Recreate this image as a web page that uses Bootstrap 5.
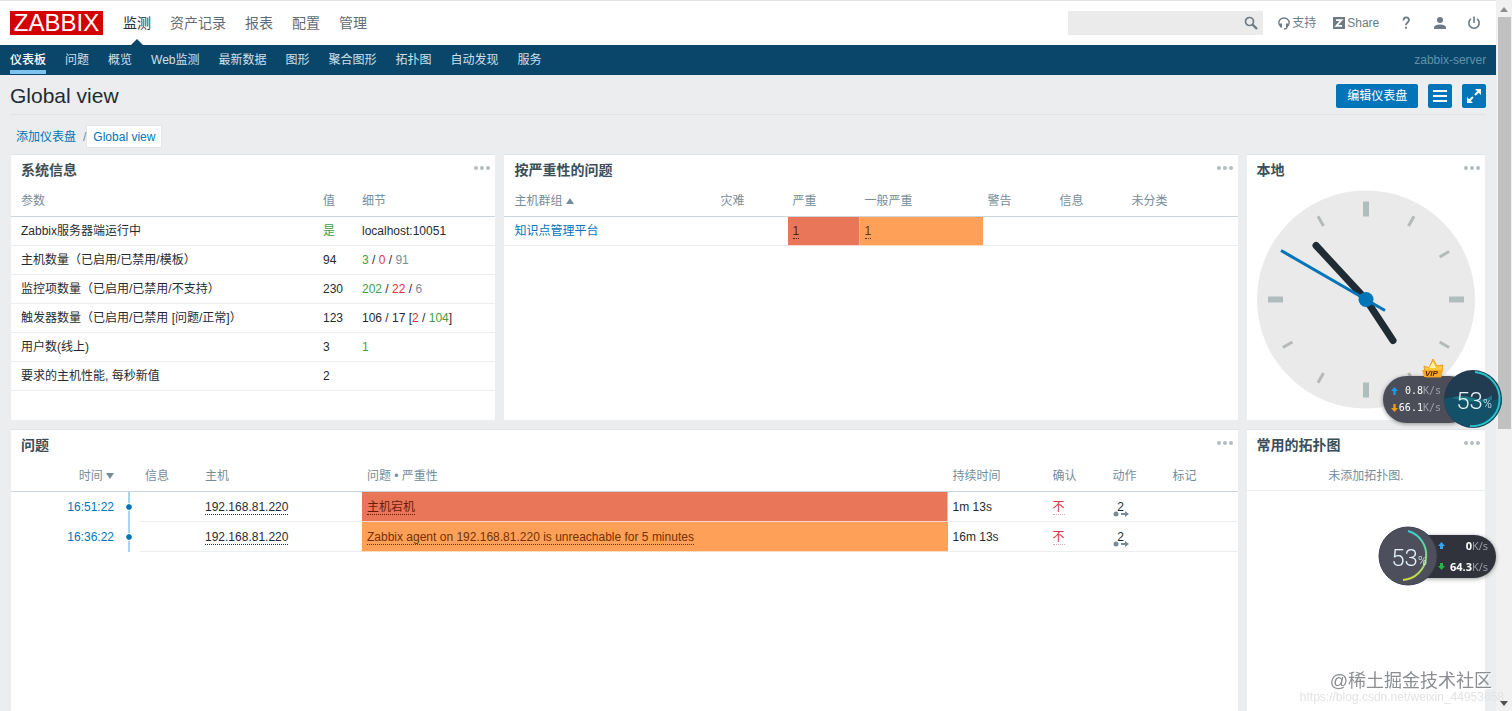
<!DOCTYPE html>
<html lang="zh-CN">
<head>
<meta charset="utf-8">
<meta name="viewport" content="width=device-width, initial-scale=1">
<title>Global view</title>
<link href="https://cdn.jsdelivr.net/npm/bootstrap@5.3.0/dist/css/bootstrap.min.css" rel="stylesheet">
<style>
body{font:12px/16px "Liberation Sans","Noto Sans CJK SC",sans-serif;color:#1f2c33;background:#ebedef}
a{color:#0275b8;text-decoration:none}
.topbar{height:45px;padding:0 10px;border-top:1px solid #dfe1e3}
.logo{background:#d40000;color:#fff;font-size:24px;line-height:24px;height:24px;width:93px;text-align:center}
.mainmenu{gap:19px;margin-left:20px;font-size:14px;line-height:20px}
.mainmenu a{color:#5f6d76;position:relative}
.mainmenu a.active{color:#26343c}
.mainmenu a.active::after{content:"";position:absolute;left:50%;top:26px;margin-left:-8px;border:8px solid transparent;border-top:0;border-bottom-color:#0a466a}
.searchbox{width:195px;height:24px;background:#ebebeb;margin-right:15px}
.searchbox input{height:24px;min-width:0}
.tools a{color:#6c7b84;display:flex;align-items:center}
.tools .t-share{margin-left:17px}
.tools .t-help,.tools .t-user,.tools .t-power{margin-left:20px}
.tools .t-power{margin-right:5px}
.tools svg.near{margin-right:2px}
.subnav{background:#0a466a;height:30px;padding:0 10px;gap:19px}
.subnav a{color:#cfe0ea;line-height:24px;border-bottom:4px solid transparent;height:29px;padding-top:3px;white-space:nowrap}
.subnav a.active{color:#fff;border-color:#7ec3ee;font-weight:500}
.server{color:#6590aa}
.titlebar{height:40px;margin:0 10px;padding-top:3px;border-bottom:1px solid #e1e4e6}
.titlebar h1{font-size:21px;line-height:26px;font-weight:400}
.actions{gap:10px}
.bluebtn{background:#0275b8;color:#fff;border:0;border-radius:2px;height:24px;font-size:12px;line-height:24px;padding:0 11px}
.bluebtn.sq{width:24px;padding:0;line-height:1}
.crumbs{padding:0 16px;height:21px;margin:11px 0 7px;line-height:22px}
.crumbs .cur{background:#fff;padding:0 6px;box-shadow:0 0 1px #b8c4ca}
.crumbs .sep{padding:0 1px 0 7px;color:#768d99}
.dash{display:grid;grid-template-columns:485fr 734fr 239fr;grid-template-rows:266px minmax(280px,1fr);gap:9px;padding:0 11px;min-height:0}
.wide{grid-column:span 2}
.panel{background:#fff;border-top:1px solid #dfe4e7;overflow:hidden;min-width:0}
.panel header{height:30px;padding:0 4px 0 10px}
.panel h2{font-size:14px;line-height:20px;font-weight:700;color:#3c4e58;padding-top:5px}
.dots{border:0;background:none;padding:0;height:26px;line-height:0}
.grid-table{table-layout:fixed;width:100%;margin:0;color:inherit;border-collapse:separate;border-spacing:0}
.grid-table th,.grid-table td{padding:0 5px;height:29px;border:0;border-bottom:1px solid #ebeef0;vertical-align:middle;font-weight:400;white-space:nowrap}
.grid-table th{height:32px;color:#768d99;border-bottom:1px solid #ccd5d9}
.grid-table th:first-child,.grid-table td:first-child{padding-left:10px}
.grid-table.prob td{height:30px}
.c1{width:307px}.c2{width:39px}
.w21{width:21px}.w60{width:60px}.w70{width:70px}.w72{width:72px}.w100{width:100px}.w108{width:108px}.w111{width:111px}.w123{width:123px}.w162{width:162px}
.grid-table td.high{background:#e97659;color:#6a1a0c;border-bottom-color:#f5d5cc;box-shadow:inset -1px 0 #f6b8a0}
.grid-table td.avg{background:#ffa059;color:#733100;border-bottom-color:#fbdcc0}
.prob td.nb{border-bottom-color:transparent}
.dot-u{border-bottom:1px dotted;color:inherit}
.dot-u.red{border-color:#d9aab0}
.grn{color:#429e47}.red{color:#dc3545}.gry{color:#768d99}
.tl{position:relative}
.tl::before{content:"";position:absolute;left:9px;top:0;bottom:-1px;width:2px;background:#a6d5f2}
.tl::after{content:"";position:absolute;left:7px;top:12px;width:6px;height:6px;border-radius:50%;background:#0275b8;outline:1px solid #fff}
.act{display:block;width:16px;text-align:center;position:relative;color:inherit}
.act svg{position:absolute;left:0;top:12px}
.clock{padding-top:1px}
.empty{height:31px;line-height:32px;color:#768d99;text-align:center;border-bottom:1px solid #ebeef0}
.sbar{width:16px;background:#f1f1f1;flex:none}
.sbar .thumb{height:58%;width:13px;background:#c1c1c1}
.float-a,.float-b{position:fixed;z-index:5;height:60px}
.float-a{right:9px;top:369px;width:120px}
.float-b{right:16px;top:526px;width:118px}
.pill{color:#fff;box-shadow:0 1px 4px #0006;width:90px}
.float-a .pill{height:47px;border-radius:24px;background:#4b4d59;padding:0 32px 0 8px;font:10px/17px "DejaVu Sans Mono",monospace}
.float-b .pill{height:43px;border-radius:22px;background:#30323c;padding:0 8px 0 32px;font:700 11px/21px "Open Sans",sans-serif}
.unit{color:#9fa2ab;font-weight:400}
.ring{position:absolute;top:0;width:60px;height:60px}
.ring span{position:absolute;inset:4px 0 0 2px;display:flex;align-items:center;justify-content:center;color:#e4f3fa;font:300 24px/28px Roboto,sans-serif}
.ring .pct{font-size:12px;padding-top:6px;font-style:normal}
.crown{position:absolute;left:38px;top:-12px}
.wm{position:fixed;right:20px;bottom:17px;font-size:18px;line-height:26px;color:#8b8d90;text-shadow:1px 1px #fff}
.wm2{position:fixed;right:8px;bottom:6px;font-size:12px;color:#e2e3e5}
</style>
</head>
<body>
<div class="d-flex vh-100 overflow-hidden">
<div class="d-flex flex-column flex-grow-1 overflow-hidden">
<header class="topbar bg-white d-flex align-items-center flex-shrink-0">
  <a class="logo" href="#">ZABBIX</a>
  <nav class="mainmenu d-flex"><a class="active" href="#">监测</a><a href="#">资产记录</a><a href="#">报表</a><a href="#">配置</a><a href="#">管理</a></nav>
  <div class="tools d-flex align-items-center ms-auto">
    <form class="searchbox d-flex align-items-center" role="search">
      <input class="border-0 bg-transparent flex-grow-1" type="search" aria-label="搜索">
      <button class="btn p-0 border-0 me-1 lh-1" type="button" aria-label="搜索"><svg width="16" height="16" fill="none" stroke="#6c7b84"><circle cx="6.500" cy="6.500" r="4" stroke-width="1.700"/><path d="M9.500 9.500l4.500 4.500" stroke-width="2.400"/></svg></button>
    </form>
    <a href="#"><svg class="near" width="12" height="13" viewBox="0 0 12 13" fill="none" stroke="#6c7b84" stroke-width="1.400"><path d="M2 9C-.8 4.500 2 1 6 1s6.800 3.500 4 8"/><path d="M3 6.500v4M9 6.500v4" stroke-width="2"/><path d="M9 10.500Q8.500 12 6 12"/></svg>支持</a>
    <a class="t-share" href="#"><svg class="near" width="12" height="12"><path fill="#6c7b84" d="M0 0h12v12H0z"/><path d="M3 3.200h5.500L3.300 8.800H9" fill="none" stroke="#fff" stroke-width="1.700"/></svg>Share</a>
    <a class="t-help" href="#" aria-label="帮助"><svg width="14" height="16" fill="none" stroke="#6c7b84" stroke-width="1.800"><path d="M4.500 5.500C4.500 1.500 10 1.500 10 5c0 2.500-3 2.500-3 5.200M7 11.700v2"/></svg></a>
    <a class="t-user" href="#" aria-label="用户"><svg width="14" height="14" fill="#6c7b84"><circle cx="7" cy="4" r="3"/><path d="M1 13V11Q2 8.500 7 8.500T13 11v2z"/></svg></a>
    <a class="t-power" href="#" aria-label="退出"><svg width="14" height="14" fill="none" stroke="#6c7b84" stroke-width="1.600"><path d="M4 2.800a5.200 5.200 0 1 0 6 0M7 0.500v6.500"/></svg></a>
  </div>
</header>
<nav class="subnav d-flex flex-shrink-0"><a class="active" href="#">仪表板</a><a href="#">问题</a><a href="#">概览</a><a href="#">Web监测</a><a href="#">最新数据</a><a href="#">图形</a><a href="#">聚合图形</a><a href="#">拓扑图</a><a href="#">自动发现</a><a href="#">服务</a><span class="server ms-auto align-self-center">zabbix-server</span></nav>
<div class="titlebar d-flex align-items-center flex-shrink-0">
  <h1 class="m-0 me-auto">Global view</h1>
  <div class="actions d-flex">
  <button class="bluebtn" type="button">编辑仪表盘</button>
  <button class="bluebtn sq" type="button" aria-label="菜单"><svg width="24" height="24" stroke="#fff" stroke-width="2"><path d="M5 7h14M5 12h14M5 17h14"/></svg></button>
  <button class="bluebtn sq" type="button" aria-label="全屏"><svg width="24" height="24" fill="#fff" stroke="#fff"><path stroke="none" d="M13 5h6v6zM5 13v6h6z"/><path d="M17 7l-4 4M7 17l4-4" stroke-width="2"/></svg></button>
  </div>
</div>
<nav class="crumbs d-flex flex-shrink-0"><a href="#">添加仪表盘</a><span class="sep">/</span><a class="cur" href="#">Global view</a></nav>
<main class="dash flex-grow-1">
  <section class="panel">
    <header class="d-flex justify-content-between"><h2>系统信息</h2><button class="dots" type="button" aria-label="更多"><svg width="18" height="6" fill="#b4bcc1"><circle cx="3" cy="3" r="2"/><circle cx="9" cy="3" r="2"/><circle cx="15" cy="3" r="2"/></svg></button></header>
    <table class="grid-table">
      <colgroup><col class="c1"><col class="c2"><col></colgroup>
      <thead><tr><th>参数</th><th>值</th><th>细节</th></tr></thead>
      <tbody>
      <tr><td>Zabbix服务器端运行中</td><td class="grn">是</td><td>localhost:10051</td></tr>
      <tr><td>主机数量（已启用/已禁用/模板）</td><td>94</td><td><span class="grn">3</span> / <span class="red">0</span> / <span class="gry">91</span></td></tr>
      <tr><td>监控项数量（已启用/已禁用/不支持）</td><td>230</td><td><span class="grn">202</span> / <span class="red">22</span> / <span class="gry">6</span></td></tr>
      <tr><td>触发器数量（已启用/已禁用 [问题/正常]）</td><td>123</td><td>106 / 17 [<span class="red">2</span> / <span class="grn">104</span>]</td></tr>
      <tr><td>用户数(线上)</td><td>3</td><td class="grn">1</td></tr>
      <tr><td>要求的主机性能, 每秒新值</td><td>2</td><td></td></tr>
      </tbody>
    </table>
  </section>
  <section class="panel">
    <header class="d-flex justify-content-between"><h2>按严重性的问题</h2><button class="dots" type="button" aria-label="更多"><svg width="18" height="6" fill="#b4bcc1"><circle cx="3" cy="3" r="2"/><circle cx="9" cy="3" r="2"/><circle cx="15" cy="3" r="2"/></svg></button></header>
    <table class="grid-table">
      <colgroup><col><col class="w72"><col class="w72"><col class="w123"><col class="w72"><col class="w72"><col class="w111"></colgroup>
      <thead><tr><th>主机群组 <svg width="8" height="6" fill="#768d99"><path d="M0 6L4 0l4 6z"/></svg></th><th>灾难</th><th>严重</th><th>一般严重</th><th>警告</th><th>信息</th><th>未分类</th></tr></thead>
      <tbody><tr><td><a href="#">知识点管理平台</a></td><td></td><td class="high"><a class="dot-u" href="#">1</a></td><td class="avg"><a class="dot-u" href="#">1</a></td><td></td><td></td><td></td></tr></tbody>
    </table>
  </section>
  <section class="panel">
    <header class="d-flex justify-content-between"><h2>本地</h2><button class="dots" type="button" aria-label="更多"><svg width="18" height="6" fill="#b4bcc1"><circle cx="3" cy="3" r="2"/><circle cx="9" cy="3" r="2"/><circle cx="15" cy="3" r="2"/></svg></button></header>
    <svg class="clock d-block mx-auto mt-1" width="218" height="220" viewBox="-109 -109 218 218">
      <circle r="109" fill="#eaeaea"/>
      <g stroke="#afbdbd" stroke-width="6"><path d="M0-98v15M0 83v15M-98 0h15M83 0h15"/></g>
      <g stroke="#b5b9ba" stroke-width="3"><path d="M0-96v11" transform="rotate(30)"/><path d="M0-96v11" transform="rotate(60)"/><path d="M0-96v11" transform="rotate(120)"/><path d="M0-96v11" transform="rotate(150)"/><path d="M0-96v11" transform="rotate(210)"/><path d="M0-96v11" transform="rotate(240)"/><path d="M0-96v11" transform="rotate(300)"/><path d="M0-96v11" transform="rotate(330)"/></g>
      <path d="M-50-54L0 0L27 41" fill="none" stroke="#1f2c33" stroke-width="7" stroke-linecap="round"/>
      <path d="M-85-49L19 11" stroke="#0275b8" stroke-width="3"/><circle r="7.500" fill="#0275b8"/>
    </svg>
  </section>
  <section class="panel wide">
    <header class="d-flex justify-content-between"><h2>问题</h2><button class="dots" type="button" aria-label="更多"><svg width="18" height="6" fill="#b4bcc1"><circle cx="3" cy="3" r="2"/><circle cx="9" cy="3" r="2"/><circle cx="15" cy="3" r="2"/></svg></button></header>
    <table class="grid-table prob">
      <colgroup><col class="w108"><col class="w21"><col class="w60"><col class="w162"><col><col class="w100"><col class="w60"><col class="w60"><col class="w70"></colgroup>
      <thead><tr><th class="text-end">时间 <svg width="8" height="6" fill="#768d99"><path d="M0 0h8L4 6z"/></svg></th><th></th><th>信息</th><th>主机</th><th>问题 • 严重性</th><th>持续时间</th><th>确认</th><th>动作</th><th>标记</th></tr></thead>
      <tbody>
      <tr><td class="nb text-end"><a href="#">16:51:22</a></td><td class="nb tl"></td><td></td><td><a class="dot-u" href="#">192.168.81.220</a></td><td class="high"><a class="dot-u" href="#">主机宕机</a></td><td>1m 13s</td><td><a class="dot-u red" href="#">不</a></td><td><a class="act" href="#">2<svg width="16" height="6"><circle cx="3" cy="3" r="2.500" fill="#768d99"/><path d="M8 2h4V0l4 3-4 3V4H8z" fill="#768d99"/></svg></a></td><td></td></tr>
      <tr><td class="nb text-end"><a href="#">16:36:22</a></td><td class="nb tl"></td><td></td><td><a class="dot-u" href="#">192.168.81.220</a></td><td class="avg"><a class="dot-u" href="#">Zabbix agent on 192.168.81.220 is unreachable for 5 minutes</a></td><td>16m 13s</td><td><a class="dot-u red" href="#">不</a></td><td><a class="act" href="#">2<svg width="16" height="6"><circle cx="3" cy="3" r="2.500" fill="#768d99"/><path d="M8 2h4V0l4 3-4 3V4H8z" fill="#768d99"/></svg></a></td><td></td></tr>
      </tbody>
    </table>
  </section>
  <section class="panel">
    <header class="d-flex justify-content-between"><h2>常用的拓扑图</h2><button class="dots" type="button" aria-label="更多"><svg width="18" height="6" fill="#b4bcc1"><circle cx="3" cy="3" r="2"/><circle cx="9" cy="3" r="2"/><circle cx="15" cy="3" r="2"/></svg></button></header>
    <div class="empty">未添加拓扑图.</div>
  </section>
</main>
</div>
<div class="sbar d-flex flex-column align-items-center">
  <svg class="flex-shrink-0" width="16" height="17" fill="#8c8c8c"><path d="M4 12l4-5 4 5z"/></svg>
  <div class="thumb"></div>
  <svg class="mt-auto flex-shrink-0" width="16" height="17" fill="#505050"><path d="M4 7h8l-4 5z"/></svg>
</div>
</div>
<div class="float-a d-flex align-items-center">
  <div class="pill d-flex flex-column justify-content-center">
    <div class="d-flex align-items-center justify-content-end"><svg class="me-auto flex-shrink-0" width="7" height="8" viewBox="0 0 9 10" fill="#1e9bea"><path d="M4.500 0L9 5H6v5H3V5H0z"/></svg><span>0.8<span class="unit">K/s</span></span></div>
    <div class="d-flex align-items-center justify-content-end"><svg class="me-auto flex-shrink-0" width="7" height="8" viewBox="0 0 9 10" fill="#f39c12"><path d="M4.500 10L9 5H6V0H3v5H0z"/></svg><span>66.1<span class="unit">K/s</span></span></div>
  </div>
  <svg class="crown" width="24" height="26"><path d="M3 9l5 2 4-9 4 7 6-1-2 12H5z" fill="#ffc83d" stroke="#e89a1c"/><path d="M1 13h21l-2 7H3z" fill="#f9a825"/><path d="M8 11l4-6 3 6z" fill="#fff3a8"/><text x="4" y="19" font-size="8" font-weight="700" font-style="italic" fill="#5a2400">VIP</text></svg>
  <div class="ring end-0"><svg width="60" height="60" fill="none"><circle cx="30" cy="30" r="29" fill="#213c50"/><path d="M1 30q12-5 29 0t29-2a29 29 0 0 1-58 2z" fill="#125168"/><path d="M9 29q10-4 21 0t19-3v5q-19 4-40-2z" fill="#1b7484"/><path d="M32 3a27 27 0 0 1-5 54" stroke="#26c3c8" stroke-width="2"/></svg><span>53<i class="pct">%</i></span></div>
</div>
<div class="float-b d-flex align-items-center justify-content-end">
  <div class="pill d-flex flex-column justify-content-center">
    <div class="d-flex align-items-center justify-content-between"><svg width="7" height="7" fill="#36a4f0"><path d="M3.500 0L7 4H5v3H2V4H0z"/></svg><span>0<span class="unit">K/s</span></span></div>
    <div class="d-flex align-items-center justify-content-between"><svg width="7" height="7" fill="#27b345"><path d="M3.500 7L7 3H5V0H2v3H0z"/></svg><span>64.3<span class="unit">K/s</span></span></div>
  </div>
  <div class="ring start-0"><svg width="60" height="60" fill="none"><defs><linearGradient id="arc" x2="0" y2="1"><stop stop-color="#35cfd0"/><stop offset="1" stop-color="#d2dc3c"/></linearGradient></defs><circle cx="30" cy="30" r="29" fill="#4d505c" stroke="#3c3e48"/><path d="M30 5a25 25 0 0 1-5 49" stroke="url(#arc)" stroke-width="2"/></svg><span>53<i class="pct">%</i></span></div>
</div>
<div class="wm2">https://blog.csdn.net/weixin_44953658</div>
<div class="wm">@稀土掘金技术社区</div>
<script src="https://cdn.jsdelivr.net/npm/bootstrap@5.3.0/dist/js/bootstrap.bundle.min.js"></script>
</body>
</html>
